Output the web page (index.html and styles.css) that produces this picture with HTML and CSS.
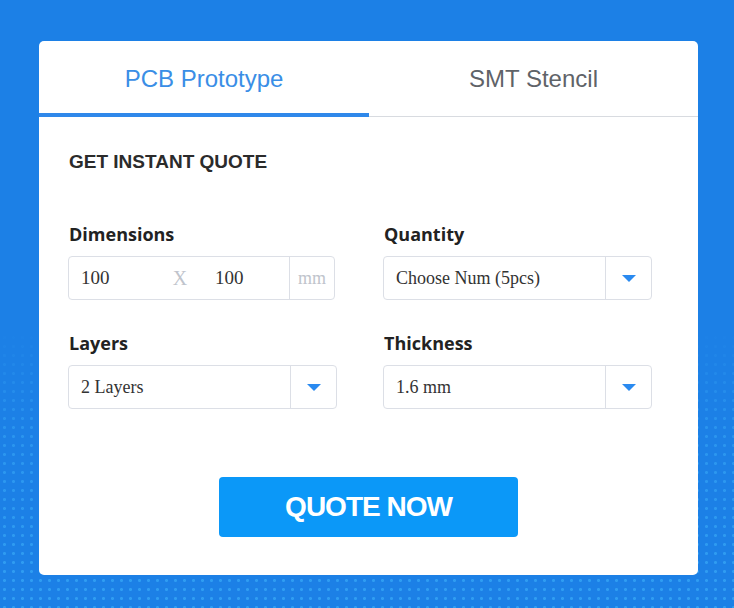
FILE: index.html
```html
<!DOCTYPE html>
<html lang="en">
<head>
<meta charset="utf-8">
<title>PCB Quote</title>
<link rel="stylesheet" href="styles.css">
</head>
<body>
<div class="card">
  <div class="tabs">
    <div class="tab active">PCB Prototype</div>
    <div class="tab">SMT Stencil</div>
  </div>
  <div class="body">
    <h2 class="title">GET INSTANT QUOTE</h2>
    <div class="grid">
      <div class="field">
        <div class="label">Dimensions</div>
        <div class="box dims">
          <span class="val w1">100</span>
          <span class="x">X</span>
          <span class="val w2">100</span>
          <span class="unit">mm</span>
        </div>
      </div>
      <div class="field">
        <div class="label">Quantity</div>
        <div class="box select">
          <span class="val grow">Choose Num (5pcs)</span>
          <span class="arrow"><i class="tri"></i></span>
        </div>
      </div>
      <div class="field">
        <div class="label">Layers</div>
        <div class="box select">
          <span class="val grow">2 Layers</span>
          <span class="arrow"><i class="tri"></i></span>
        </div>
      </div>
      <div class="field">
        <div class="label">Thickness</div>
        <div class="box select">
          <span class="val grow">1.6 mm</span>
          <span class="arrow"><i class="tri"></i></span>
        </div>
      </div>
    </div>
    <div class="actions">
      <button class="btn">QUOTE NOW</button>
    </div>
  </div>
</div>
</body>
</html>
```
FILE: styles.css
```css
html, body {
  margin: 0;
  padding: 0;
}
body {
  width: 734px;
  height: 608px;
  box-sizing: border-box;
  padding: 41px 0 0 39px;
  overflow: hidden;
  background:
    linear-gradient(to bottom, #1c80e6 0, #1c80e6 330px, rgba(28,128,230,0.55) 430px, rgba(28,128,230,0.35) 608px),
    radial-gradient(circle, rgba(70,190,255,0.75) 1.2px, transparent 1.8px) 0 0 / 9px 9px,
    #1c80e6;
  font-family: "Liberation Sans", Arial, sans-serif;
}
.card {
  width: 659px;
  height: 534px;
  background: #fff;
  border-radius: 5px;
  overflow: hidden;
}
.tabs {
  display: flex;
  height: 75px;
  border-bottom: 1px solid #d8dbe0;
}
.tab {
  width: 330px;
  display: flex;
  align-items: center;
  justify-content: center;
  font-size: 24px;
  color: #5f6368;
  padding-top: 1px;
  box-sizing: border-box;
}
.tab.active {
  color: #3a8ee6;
  border-bottom: 4px solid #2f88ea;
  margin-bottom: -1px;
  padding-top: 4px;
}
.tab + .tab {
  width: 329px;
}
.body {
  padding: 33px 0 0 29px;
}
.title {
  margin: 0;
  font-size: 19px;
  line-height: 24px;
  font-weight: bold;
  color: #2b2b2b;
  padding-left: 1px;
}
.grid {
  margin-top: 49px;
  display: grid;
  grid-template-columns: 269px 269px;
  column-gap: 46px;
  row-gap: 32px;
}
.label {
  font-family: "Open Sans", sans-serif;
  font-weight: bold;
  font-size: 18px;
  line-height: 22px;
  color: #222;
  margin-bottom: 11px;
  padding-left: 1px;
}
.box {
  height: 44px;
  box-sizing: border-box;
  border: 1px solid #dcdfe6;
  border-radius: 4px;
  display: flex;
  align-items: stretch;
  font-family: "Liberation Serif", "Times New Roman", serif;
  font-size: 18px;
  color: #333;
}
.box.dims {
  width: 267px;
}
.val {
  display: flex;
  align-items: center;
  padding-left: 12px;
}
.w1 {
  width: 77px;
  font-size: 19px;
}
.x {
  width: 44px;
  display: flex;
  align-items: center;
  justify-content: center;
  color: #c0c4cc;
  font-size: 20px;
}
.w2 {
  flex: 1;
  padding-left: 13px;
  font-size: 19px;
}
.unit {
  width: 44px;
  border-left: 1px solid #dcdfe6;
  display: flex;
  align-items: center;
  justify-content: center;
  color: #c0c4cc;
  font-size: 18px;
}
.grow {
  flex: 1;
}
.arrow {
  width: 45px;
  border-left: 1px solid #dcdfe6;
  display: flex;
  align-items: center;
  justify-content: center;
}
.tri {
  width: 0;
  height: 0;
  border-left: 7px solid transparent;
  border-right: 7px solid transparent;
  border-top: 7px solid #2a8af0;
}
.actions {
  margin-top: 68px;
  padding-right: 29px;
  display: flex;
  justify-content: center;
}
.btn {
  width: 299px;
  height: 60px;
  border: none;
  border-radius: 4px;
  background: #0b98f8;
  color: #fff;
  font-family: "Liberation Sans", Arial, sans-serif;
  font-weight: bold;
  font-size: 28px;
  letter-spacing: -1px;
  padding: 0;
}
```
